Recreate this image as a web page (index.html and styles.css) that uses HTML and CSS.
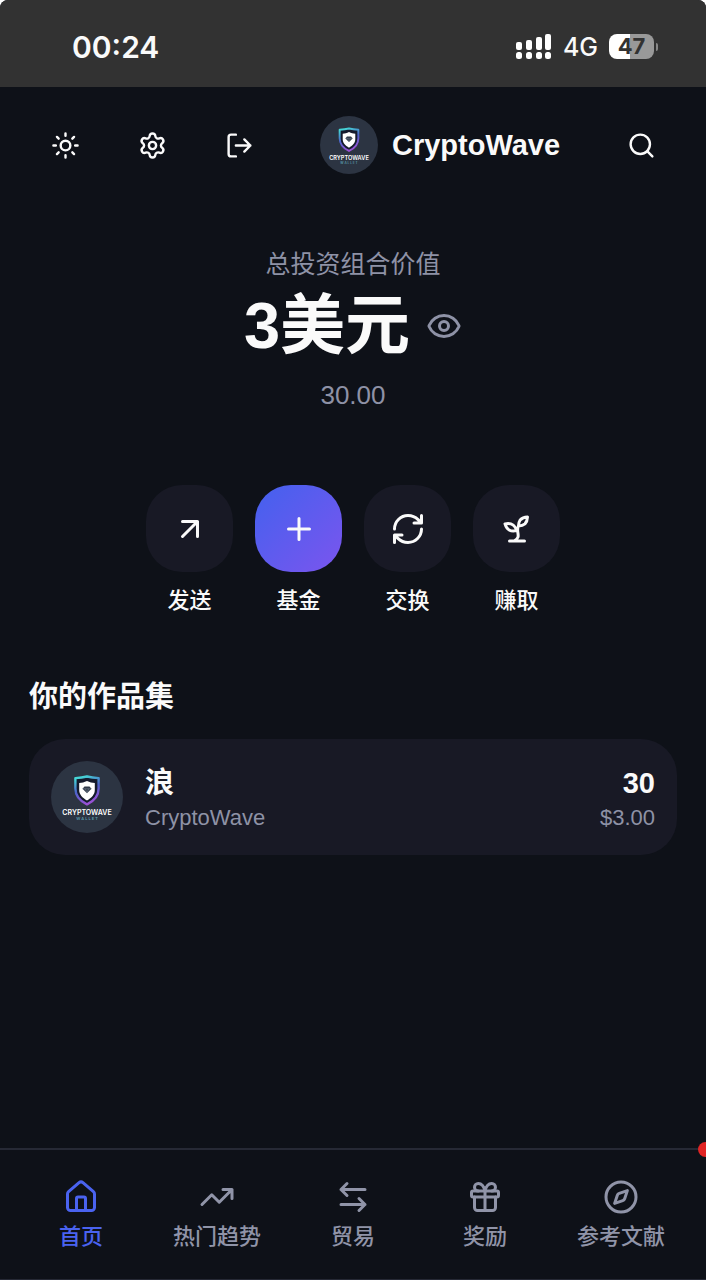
FILE: index.html
```html
<!DOCTYPE html>
<html lang="zh-CN">
<head>
<meta charset="utf-8">
<meta name="viewport" content="width=device-width, initial-scale=1">
<title>CryptoWave</title>
<link rel="stylesheet" href="styles.css">
</head>
<body>
<svg class="defs" aria-hidden="true">
  <defs>
    <linearGradient id="shield" x1="0.3" y1="0" x2="0.6" y2="1">
      <stop offset="0" stop-color="#45d6d6"/>
      <stop offset="0.45" stop-color="#4c62c8"/>
      <stop offset="1" stop-color="#a04fd6"/>
    </linearGradient>
    <symbol id="brand" viewBox="0 0 72 72">
      <circle cx="36" cy="36" r="36" fill="#2c3442"/>
      <path d="M36 15.500c4 1 8 1.400 11.600 1.600v10.500c0 7.500-4.600 12.500-11.600 15.800-7-3.300-11.600-8.300-11.600-15.800v-10.500c3.600-.2 7.600-.6 11.600-1.600z" fill="#151a2c" stroke="url(#shield)" stroke-width="2.400" stroke-linejoin="round"/>
      <path d="M36 20c2.800 1.300 5 1.800 7.800 2v7c0 4.500-3.200 7.800-7.800 10.500-4.600-2.700-7.800-6-7.800-10.500v-7c2.800-.2 5-.7 7.800-2z" fill="#fff"/>
      <path d="M33.500 25.500h5l2 2.300-4.500 4.500-4.500-4.500z" fill="#303a4a"/>
      <path d="M31.500 27.800h9M34.300 27.800l1.700 4 1.700-4" fill="none" stroke="#7e8a99" stroke-width=".5"/>
      <text class="brand-name" x="36" y="54" text-anchor="middle">CRYPTOWAVE</text>
      <text class="brand-sub" x="36" y="59" text-anchor="middle">W A L L E T</text>
    </symbol>
  </defs>
</svg>
<div class="app">
  <div class="status">
    <span class="clock">00:24</span>
    <div class="status-right">
      <svg class="signal" viewBox="0 0 36 26" fill="#fff" aria-hidden="true">
        <rect x="0" y="8" width="6" height="8" rx="2"/><rect x="10" y="6" width="6" height="10" rx="2"/><rect x="20" y="3" width="6" height="13" rx="2"/><rect x="29" y="0" width="6" height="16" rx="2"/>
        <rect x="0" y="18" width="6" height="7" rx="2.500"/><rect x="10" y="18" width="6" height="7" rx="2.500"/><rect x="20" y="18" width="6" height="7" rx="2.500"/><rect x="29" y="18" width="6" height="7" rx="2.500"/>
      </svg>
      <span class="network">4G</span>
      <span class="battery"><span class="battery-level">47</span><i class="battery-tip"></i></span>
    </div>
  </div>

  <header class="header">
    <div class="tools">
      <button class="tool" aria-label="主题"><svg class="icon" viewBox="0 0 24 24"><circle cx="12" cy="12" r="4"/><path d="M12 2v2M12 20v2M4.930 4.930l1.410 1.410M17.660 17.660l1.410 1.410M2 12h2M20 12h2M6.340 17.660l-1.410 1.410M19.070 4.930l-1.410 1.410"/></svg></button>
      <button class="tool" aria-label="设置"><svg class="icon" viewBox="0 0 24 24"><path d="M9.671 4.136a2.340 2.340 0 0 1 4.659 0 2.340 2.340 0 0 0 3.319 1.915 2.340 2.340 0 0 1 2.330 4.033 2.340 2.340 0 0 0 0 3.831 2.340 2.340 0 0 1-2.330 4.033 2.340 2.340 0 0 0-3.319 1.915 2.340 2.340 0 0 1-4.659 0 2.340 2.340 0 0 0-3.320-1.915 2.340 2.340 0 0 1-2.330-4.033 2.340 2.340 0 0 0 0-3.831A2.340 2.340 0 0 1 6.350 6.051a2.340 2.340 0 0 0 3.319-1.915"/><circle cx="12" cy="12" r="3"/></svg></button>
      <button class="tool" aria-label="退出"><svg class="icon" viewBox="0 0 24 24"><path d="M9 21H5a2 2 0 0 1-2-2V5a2 2 0 0 1 2-2h4M16 17l5-5-5-5M21 12H9"/></svg></button>
    </div>
    <div class="brand">
      <svg class="brand-logo" aria-hidden="true"><use href="#brand"/></svg>
      <h1 class="brand-title">CryptoWave</h1>
    </div>
    <button class="tool" aria-label="搜索"><svg class="icon" viewBox="0 0 24 24"><circle cx="11" cy="11" r="8"/><path d="m21 21-4.300-4.300"/></svg></button>
  </header>

  <main class="main">
    <section class="balance">
      <p class="balance-label">总投资组合价值</p>
      <div class="balance-row">
        <strong class="balance-value">3美元</strong>
        <button class="eye" aria-label="隐藏余额"><svg class="icon icon-lg" viewBox="0 0 24 24"><path d="M2.062 12.348a1 1 0 0 1 0-.696 10.750 10.750 0 0 1 19.876 0 1 1 0 0 1 0 .696 10.750 10.750 0 0 1-19.876 0"/><circle cx="12" cy="12" r="3"/></svg></button>
      </div>
      <p class="balance-sub">30.00</p>
    </section>

    <div class="actions">
      <button class="action"><span class="tile"><svg class="icon icon-lg" viewBox="0 0 24 24"><path d="M7 7h10v10M7 17 17 7"/></svg></span>发送</button>
      <button class="action"><span class="tile tile-primary"><svg class="icon icon-lg" viewBox="0 0 24 24"><path d="M5 12h14M12 5v14"/></svg></span>基金</button>
      <button class="action"><span class="tile"><svg class="icon icon-lg" viewBox="0 0 24 24"><path d="M3 12a9 9 0 0 1 9-9 9.750 9.750 0 0 1 6.740 2.740L21 8M21 3v5h-5M21 12a9 9 0 0 1-9 9 9.750 9.750 0 0 1-6.740-2.740L3 16M8 16H3v5"/></svg></span>交换</button>
      <button class="action"><span class="tile"><svg class="icon icon-lg" viewBox="0 0 24 24"><path d="M7 20h10M10 20c5.500-2.500.8-6.400 3-10M9.500 9.400c1.100.8 1.800 2.200 2.300 3.700-2 .4-3.500.4-4.800-.3-1.200-.6-2.300-1.900-3-4.200 2.800-.5 4.400 0 5.500.8zM14.100 6a7 7 0 0 0-1.100 4c1.900-.1 3.300-.6 4.300-1.400 1-1 1.600-2.300 1.700-4.600-2.700.1-4 1-4.900 2z"/></svg></span>赚取</button>
    </div>

    <section class="portfolio">
      <h2 class="section-title">你的作品集</h2>
      <article class="asset">
        <svg class="asset-logo" aria-hidden="true"><use href="#brand"/></svg>
        <div class="asset-text">
          <span class="asset-main">浪</span>
          <span class="asset-sub">CryptoWave</span>
        </div>
        <div class="asset-text asset-amount">
          <span class="asset-main">30</span>
          <span class="asset-sub">$3.00</span>
        </div>
      </article>
    </section>
  </main>

  <nav class="nav">
    <a class="nav-item nav-active" href="#"><svg class="icon icon-lg" viewBox="0 0 24 24"><path d="M15 21v-8a1 1 0 0 0-1-1h-4a1 1 0 0 0-1 1v8"/><path d="M3 10a2 2 0 0 1 .709-1.528l7-5.999a2 2 0 0 1 2.582 0l7 5.999A2 2 0 0 1 21 10v9a2 2 0 0 1-2 2H5a2 2 0 0 1-2-2z"/></svg>首页</a>
    <a class="nav-item" href="#"><svg class="icon icon-lg" viewBox="0 0 24 24"><path d="M22 7l-8.500 8.500-5-5L2 17M16 7h6v6"/></svg>热门趋势</a>
    <a class="nav-item" href="#"><svg class="icon icon-lg" viewBox="0 0 24 24"><path d="M8 3 4 7l4 4M4 7h16M16 21l4-4-4-4M20 17H4"/></svg>贸易</a>
    <a class="nav-item" href="#"><svg class="icon icon-lg" viewBox="0 0 24 24"><rect x="3" y="8" width="18" height="4" rx="1"/><path d="M12 8v13M19 12v7a2 2 0 0 1-2 2H7a2 2 0 0 1-2-2v-7M7.500 8a2.500 2.500 0 0 1 0-5A4.800 8 0 0 1 12 8a4.800 8 0 0 1 4.500-5 2.500 2.500 0 0 1 0 5"/></svg>奖励</a>
    <a class="nav-item" href="#"><svg class="icon icon-lg" viewBox="0 0 24 24"><circle cx="12" cy="12" r="10"/><path d="m16.240 7.760-1.804 5.411a2 2 0 0 1-1.265 1.265L7.760 16.240l1.804-5.411a2 2 0 0 1 1.265-1.265z"/></svg>参考文献</a>
    <i class="nav-dot"></i>
  </nav>
</div>
</body>
</html>
```
FILE: styles.css
```css
* {
  box-sizing: border-box;
}

body {
  margin: 0;
  background: #fff;
  font-family: "Liberation Sans", "Noto Sans CJK SC", sans-serif;
  color: #fafafa;
}

h1, h2, p {
  margin: 0;
}

button {
  padding: 0;
  border: 0;
  background: none;
  color: inherit;
  font: inherit;
  cursor: pointer;
}

.defs {
  position: absolute;
  width: 0;
  height: 0;
}

.app {
  display: flex;
  flex-direction: column;
  min-height: 100vh;
  overflow: hidden;
  border-radius: 8px 8px 0 0;
  background: #0e1118;
}

.icon {
  display: block;
  width: 29px;
  height: 29px;
  fill: none;
  stroke: currentColor;
  stroke-width: 2;
  stroke-linecap: round;
  stroke-linejoin: round;
}

.icon-lg {
  width: 36px;
  height: 36px;
}

/* Status bar */
.status {
  display: flex;
  align-items: center;
  justify-content: space-between;
  height: 87px;
  padding: 6px 48px 0 72px;
  background: #323232;
  font-family: Inter, sans-serif;
}

.clock {
  font-size: 30px;
  font-weight: 600;
}

.status-right {
  display: flex;
  align-items: center;
  gap: 11px;
}

.signal {
  width: 36px;
  height: 26px;
}

.network {
  font-size: 25px;
  font-weight: 500;
}

.battery {
  position: relative;
  margin-right: 4px;
}

.battery-level {
  display: block;
  width: 45px;
  border-radius: 8px;
  background: linear-gradient(90deg, #fff 47%, #999 47%);
  color: #323232;
  font-size: 22px;
  font-weight: 700;
  line-height: 25px;
  text-align: center;
}

.battery-tip {
  position: absolute;
  top: 9px;
  left: 47px;
  width: 2px;
  height: 8px;
  border-radius: 0 2px 2px 0;
  background: #888;
}

/* Header */
.header {
  display: flex;
  align-items: center;
  justify-content: space-between;
  padding: 22px 29px;
}

.tools {
  display: flex;
  gap: 15px;
}

.tool {
  display: grid;
  place-items: center;
  width: 72px;
  height: 72px;
}

.brand {
  display: flex;
  align-items: center;
  gap: 14px;
}

.brand-logo {
  width: 58px;
  height: 58px;
}

.brand-title {
  font-size: 29px;
  line-height: 36px;
}

.brand-name {
  fill: #fff;
  font-family: Inter, sans-serif;
  font-size: 7px;
  font-weight: 600;
}

.brand-sub {
  fill: #5a9aaa;
  font-family: Inter, sans-serif;
  font-size: 4px;
  font-weight: 600;
}

/* Balance */
.main {
  flex: 1;
  padding: 43px 29px 29px;
}

.balance {
  display: flex;
  flex-direction: column;
  align-items: center;
  color: #8e92a6;
}

.balance-label {
  font-size: 25px;
  line-height: 36px;
}

.balance-row {
  display: flex;
  align-items: center;
  gap: 16px;
}

.balance-value {
  color: #fafafa;
  font-size: 65px;
  line-height: 87px;
}

.balance-sub {
  margin-top: 8px;
  font-size: 26px;
  line-height: 36px;
}

/* Actions */
.actions {
  display: flex;
  justify-content: center;
  gap: 22px;
  margin-top: 72px;
}

.action {
  display: flex;
  flex-direction: column;
  align-items: center;
  gap: 14px;
  font-size: 22px;
  font-weight: 500;
  line-height: 29px;
}

.tile {
  display: grid;
  place-items: center;
  width: 87px;
  height: 87px;
  border-radius: 36px;
  background: #181925;
}

.tile-primary {
  background: linear-gradient(135deg, #4361ee, #7b55ee);
}

/* Portfolio */
.portfolio {
  display: flex;
  flex-direction: column;
  gap: 22px;
  margin-top: 62px;
}

.section-title {
  font-size: 29px;
  line-height: 40px;
}

.asset {
  display: flex;
  align-items: center;
  gap: 22px;
  padding: 22px;
  border-radius: 36px;
  background: #181925;
}

.asset-logo {
  width: 72px;
  height: 72px;
}

.asset-text {
  display: flex;
  flex-direction: column;
}

.asset-amount {
  margin-left: auto;
  text-align: right;
}

.asset-main {
  font-size: 29px;
  font-weight: 700;
  line-height: 40px;
}

.asset-sub {
  color: #8e92a6;
  font-size: 22px;
  line-height: 29px;
}

/* Bottom navigation */
.nav {
  position: relative;
  display: flex;
  justify-content: space-around;
  padding: 29px 15px 28px;
  border-top: 2px solid #262935;
  border-bottom: 1px solid #262935;
}

.nav-item {
  display: flex;
  flex-direction: column;
  align-items: center;
  gap: 7px;
  min-width: 116px;
  padding: 0 18px;
  color: #9094a8;
  font-size: 22px;
  font-weight: 500;
  line-height: 29px;
  text-decoration: none;
}

.nav-active {
  color: #4a63f0;
}

.nav-dot {
  position: absolute;
  top: -8px;
  right: -7px;
  width: 15px;
  height: 15px;
  border-radius: 50%;
  background: #e02424;
}
```
